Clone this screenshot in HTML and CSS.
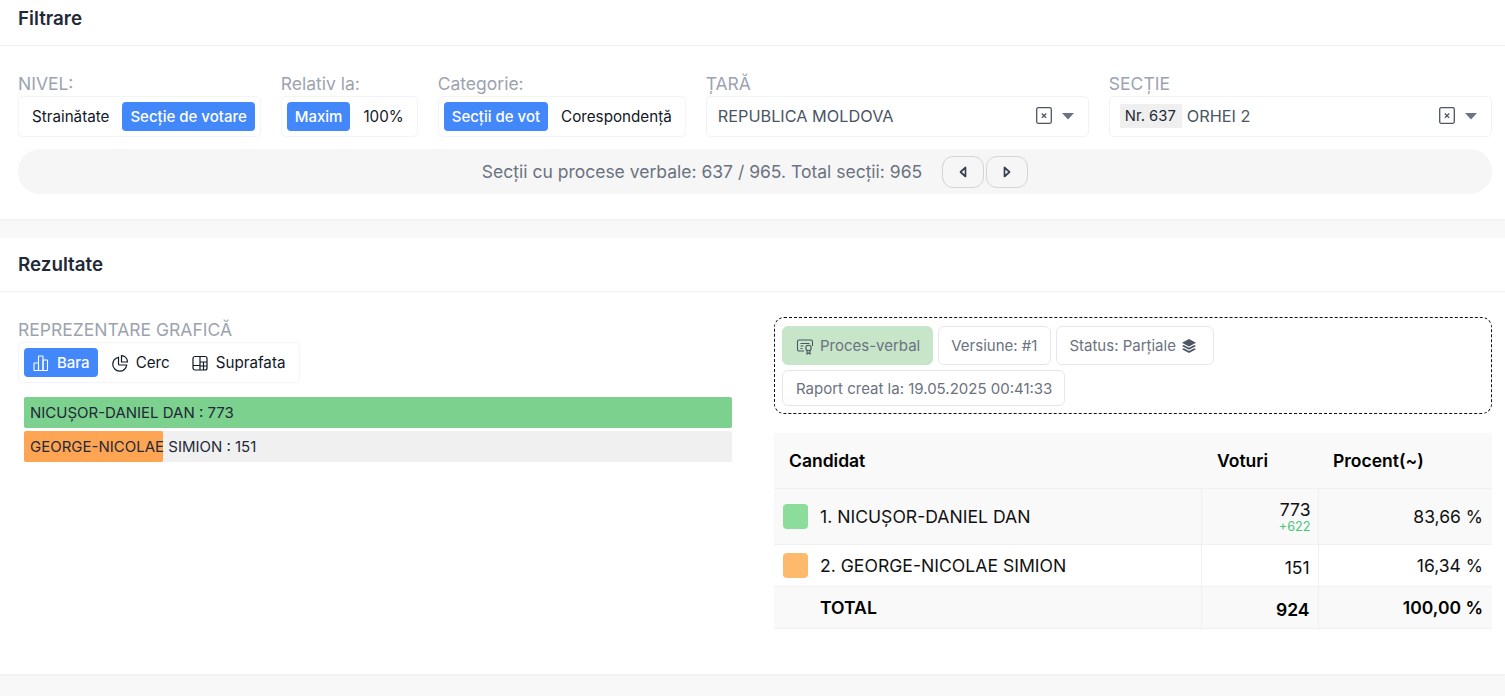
FILE: index.html
```html
<!DOCTYPE html>
<html lang="ro">
<head>
<meta charset="utf-8">
<title>Rezultate</title>
<link rel="stylesheet" href="styles.css">
</head>
<body>
<section class="card card-filter">
  <h2 class="card-title">Filtrare</h2>
  <div class="card-body filter-body">
    <div class="filter-row">
      <div class="field">
        <div class="label">NIVEL:</div>
        <div class="seg"><span class="seg-item">Strainătate</span><span class="seg-item active">Secție de votare</span></div>
      </div>
      <div class="field">
        <div class="label">Relativ la:</div>
        <div class="seg"><span class="seg-item active">Maxim</span><span class="seg-item">100%</span></div>
      </div>
      <div class="field">
        <div class="label">Categorie:</div>
        <div class="seg"><span class="seg-item active">Secții de vot</span><span class="seg-item">Corespondență</span></div>
      </div>
      <div class="field grow">
        <div class="label">ȚARĂ</div>
        <div class="select"><span class="select-value">REPUBLICA MOLDOVA</span>
          <svg class="clear" width="16" height="17" viewBox="0 0 16 17"><rect x=".7" y=".7" width="14.600" height="15.600" rx="1.500" fill="none" stroke="#4b5563" stroke-width="1.300"/><path d="M5.800 6.500l4.400 4.400m0-4.400l-4.400 4.400" stroke="#4b5563" stroke-width="1.300"/></svg>
          <svg class="caret" width="14" height="8" viewBox="0 0 14 8"><path d="M1 1h12L7 7.500z" fill="#6b7280"/></svg>
        </div>
      </div>
      <div class="field grow">
        <div class="label">SECȚIE</div>
        <div class="select select-tag"><span class="tag">Nr. 637</span><span class="select-value">ORHEI 2</span>
          <svg class="clear" width="16" height="17" viewBox="0 0 16 17"><rect x=".7" y=".7" width="14.600" height="15.600" rx="1.500" fill="none" stroke="#4b5563" stroke-width="1.300"/><path d="M5.800 6.500l4.400 4.400m0-4.400l-4.400 4.400" stroke="#4b5563" stroke-width="1.300"/></svg>
          <svg class="caret" width="14" height="8" viewBox="0 0 14 8"><path d="M1 1h12L7 7.500z" fill="#6b7280"/></svg>
        </div>
      </div>
    </div>
    <div class="status-bar">
      <span class="status-text">Secții cu procese verbale: 637 / 965. Total secții: 965</span>
      <div class="pager">
        <button class="pager-btn" type="button"><svg width="8" height="12" viewBox="0 0 8 12"><path d="M6.500 1.500v9L1.500 6z" fill="none" stroke="#374151" stroke-width="1.700" stroke-linejoin="round"/></svg></button>
        <button class="pager-btn" type="button"><svg width="8" height="12" viewBox="0 0 8 12"><path d="M1.500 1.500v9L6.500 6z" fill="none" stroke="#374151" stroke-width="1.700" stroke-linejoin="round"/></svg></button>
      </div>
    </div>
  </div>
</section>

<section class="card card-results">
  <h2 class="card-title">Rezultate</h2>
  <div class="card-body results-body">
    <div class="chart-col">
      <div class="label">REPREZENTARE GRAFICĂ</div>
      <div class="seg seg-chart">
        <span class="seg-item active"><svg width="18" height="18" viewBox="0 0 18 18" fill="none" stroke="currentColor" stroke-width="1.100"><rect x="2" y="9" width="4.500" height="7.500" rx=".6"/><rect x="6.500" y="2" width="4.500" height="14.500" rx=".6"/><rect x="11" y="6" width="4.500" height="10.500" rx=".6"/></svg>Bara</span>
        <span class="seg-item"><svg width="18" height="18" viewBox="0 0 18 18" fill="none" stroke="#111827" stroke-width="1.200"><path d="M7.500 3.300A7 7 0 1 0 15.700 11H8.500a1 1 0 0 1-1-1z"/><path d="M10.500 1.600a6.500 6.500 0 0 1 6 6v.4h-6z"/></svg>Cerc</span>
        <span class="seg-item"><svg width="18" height="18" viewBox="0 0 18 18" fill="none" stroke="#111827" stroke-width="1.200"><rect x="2" y="2.500" width="14" height="13.500" rx="2"/><path d="M2 11.500h7M9 2.500V16M9 8h7M12.500 8v8M9 12h7"/></svg>Suprafata</span>
      </div>
      <div class="bars">
        <div class="bar"><div class="bar-fill fill-green w-full"></div><span class="bar-label">NICUȘOR-DANIEL DAN : 773</span></div>
        <div class="bar"><div class="bar-fill fill-orange" style="width:19.6%"></div><span class="bar-label">GEORGE-NICOLAE SIMION : 151</span></div>
      </div>
    </div>
    <div class="table-col">
      <div class="chips">
        <span class="chip chip-green"><svg width="18" height="18" viewBox="0 0 18 18" fill="none" stroke="#4b5563" stroke-width="1.100"><path d="M8 14H3a1.500 1.500 0 0 1-1.500-1.500V4.500A1.500 1.500 0 0 1 3 3h12a1.500 1.500 0 0 1 1.500 1.500V9"/><path d="M4.500 6.500h9M4.500 9h3M4.500 11.500h2"/><circle cx="12.500" cy="11" r="2.700"/><path d="M11 13.300V17l1.500-1 1.500 1v-3.700"/></svg>Proces-verbal</span>
        <span class="chip chip-version">Versiune: #1</span>
        <span class="chip chip-status">Status: Parțiale <svg width="16" height="16" viewBox="0 0 16 16" fill="#4b5563"><path d="M8 1 1 4.700 8 8.400l7-3.700z"/><path d="M2.800 7 1 8l7 3.700L15 8l-1.800-1L8 9.700z"/><path d="M2.800 10.300 1 11.300 8 15l7-3.700-1.800-1L8 13z"/></svg></span>
        <span class="chip chip-small">Raport creat la: 19.05.2025 00:41:33</span>
      </div>
      <table class="results">
        <colgroup><col class="col-name"><col class="col-votes"><col class="col-pct"></colgroup>
        <thead>
          <tr><th class="th-name">Candidat</th><th class="th-votes">Voturi</th><th class="th-pct">Procent(~)</th></tr>
        </thead>
        <tbody>
          <tr class="row-one shaded">
            <td><div class="cand"><span class="swatch sw-green"></span>1. NICUȘOR-DANIEL DAN</div></td>
            <td class="num"><div class="votes">773</div><div class="delta">+622</div></td>
            <td class="num">83,66 %</td>
          </tr>
          <tr class="row-two">
            <td><div class="cand"><span class="swatch sw-orange"></span>2. GEORGE-NICOLAE SIMION</div></td>
            <td class="num lower">151</td>
            <td class="num">16,34 %</td>
          </tr>
          <tr class="row-total shaded">
            <td><div class="cand total-name">TOTAL</div></td>
            <td class="num lower">924</td>
            <td class="num">100,00 %</td>
          </tr>
          <tr class="row-end"><td></td><td></td><td></td></tr>
        </tbody>
      </table>
    </div>
  </div>
</section>
</body>
</html>
```
FILE: styles.css
```css
* { box-sizing: border-box; }
html, body { height: 100%; }
body {
  margin: 0;
  background: #f8f8f8;
  font-family: Inter, "Noto Sans", sans-serif;
  color: #111827;
  overflow: hidden;
}
.card {
  background: #fff;
  box-shadow: 0 1px 2px rgba(0,0,0,.05);
}
.card-filter { margin-top: -8px; height: 227px; }
.card-results { margin-top: 19px; height: 436px; }
.card-title {
  margin: 0;
  height: 54px;
  padding: 0 18px;
  display: flex;
  align-items: center;
  font-size: 18.800px;
  font-weight: 600;
  color: #1f2937;
  border-bottom: 1px solid #f1f1f3;
}
.filter-body { padding: 27px 13px 0 18px; }
.filter-row { display: flex; gap: 20px; }
.field { display: flex; flex-direction: column; }
.grow { flex: 1 1 0; }
.label {
  height: 23px;
  font-size: 17.500px;
  line-height: 21px;
  color: #9ca3af;
}
.seg {
  display: flex;
  align-items: center;
  height: 41px;
  padding: 0 5px;
  gap: 5px;
  border: 1px solid #f3f4f6;
  border-radius: 5px;
  background: #fff;
}
.seg-item {
  display: inline-flex;
  align-items: center;
  height: 29px;
  padding: 0 8px;
  font-size: 15.200px;
  border-radius: 4px;
  color: #111827;
}
.seg-item.active { background: #4388fb; color: #fff; font-size: 15px; font-weight: 500; }
.select {
  display: flex;
  align-items: center;
  height: 41px;
  padding: 0 13px 2px 11px;
  border: 1px solid #f1f2f4;
  border-radius: 5px;
  font-size: 16.300px;
  color: #4b5563;
}
.select-value { flex: 1; }
.select-tag { padding-left: 10px; }
.tag {
  background: #efefef;
  color: #1f2937;
  font-size: 14.800px;
  height: 24px;
  line-height: 24px;
  padding: 0 6px 0 5px;
  margin-right: 5px;
}
.clear { margin-right: 9px; }
.status-bar {
  margin-top: 12px;
  height: 45px;
  border-radius: 22px;
  background: #f6f6f6;
  display: flex;
  align-items: center;
  justify-content: center;
  gap: 20px;
}
.status-text { font-size: 17.500px; color: #6b7280; }
.pager { display: flex; gap: 2px; }
.pager-btn {
  width: 42px;
  height: 32px;
  padding: 0;
  display: flex;
  align-items: center;
  justify-content: center;
  background: #f6f6f6;
  border: 1px solid #d4d4d4;
  border-radius: 11px;
}
.results-body { display: flex; padding: 25px 13px 0 18px; }
.chart-col { width: 714px; padding-top: 2px; }
.seg-chart { width: 282px; }
.seg-chart .seg-item { gap: 7px; }
.bars { margin-top: 14px; padding-left: 6px; display: flex; flex-direction: column; gap: 3px; }
.bar {
  position: relative;
  height: 31px;
  background: #f0f0f0;
  border-radius: 2px;
  display: flex;
  align-items: center;
}
.bar-fill { position: absolute; left: 0; top: 0; bottom: 0; border-radius: 2px; }
.w-full { width: 100%; }
.fill-green { background: #7bd18d; }
.fill-orange { background: #fea554; }
.bar-label { position: relative; padding-left: 6px; font-size: 15px; color: #1f2937; }
.table-col { margin-left: 42px; flex: 1; min-width: 0; }
.chips {
  display: flex;
  flex-wrap: wrap;
  gap: 5px;
  height: 97px;
  padding: 8px 7px;
  border: 1px dashed #111;
  border-radius: 10px;
  align-content: flex-start;
}
.chip {
  display: inline-flex;
  align-items: center;
  gap: 5px;
  height: 39px;
  padding: 0 12px;
  font-size: 15px;
  color: #6b7280;
  border: 1px solid #e5e7eb;
  border-radius: 6px;
  background: #fff;
}
.chip-green { background: #c7e5c8; border-color: #c7e5c8; padding: 0 12px 0 13px; gap: 6px; }
.chip-version { padding-right: 13px; }
.chip-status { padding-right: 16px; }
.chip-small { height: 36px; padding-left: 13px; }
.results {
  margin-top: 19px;
  width: 718px;
  border-collapse: collapse;
  table-layout: fixed;
}
.col-name { width: 427px; }
.col-votes { width: 117px; }
.col-pct { width: 174px; }
.results th {
  height: 55px;
  background: #f9f9f9;
  font-size: 17.500px;
  font-weight: 600;
  color: #000;
  text-align: left;
  border-bottom: 1px solid #f0f0f0;
  padding: 0 15px;
}
.results .th-votes { padding-left: 16px; }
.results td {
  padding: 0 7px 0 9px;
  font-size: 17.500px;
  color: #111;
  border-right: 1px solid #f0f0f0;
  border-bottom: 1px solid #f0f0f0;
}
.results td:last-child { border-right: 0; padding-right: 9px; }
.shaded td { background: #f9f9f9; }
.row-one td { height: 56px; }
.row-two td { height: 42px; }
.row-total td { height: 42px; font-weight: 600; color: #000; }
.results .row-end td { height: 2px; padding: 0; border-bottom: 0; }
.cand { display: flex; align-items: center; gap: 12px; font-size: 17.600px; }
.total-name { padding-left: 37px; }
.swatch { width: 25px; height: 25px; border-radius: 4px; }
.sw-green { background: #8cdc9b; }
.sw-orange { background: #feba6c; }
.num { text-align: right; }
.results .lower { padding: 4px 8px 0 9px; }
.votes { line-height: 20px; margin-top: 1px; }
.delta { font-size: 12.700px; line-height: 14px; color: #4ac47a; }
```
